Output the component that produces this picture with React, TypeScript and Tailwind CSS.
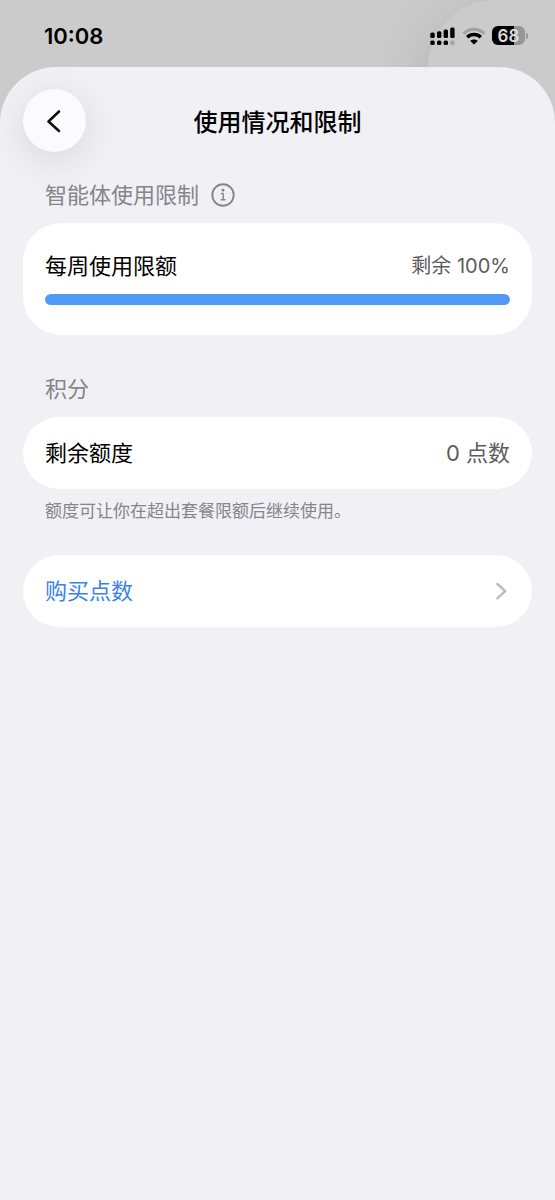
import React from "react";

function SignalIcon() {
  return (
    <svg width="26" height="20" viewBox="0 0 26 20" aria-hidden="true">
      <g fill="#000">
        <rect x="0.3" y="6.6" width="4.4" height="5.4" rx="1.5" />
        <rect x="7" y="5.2" width="4.4" height="6.8" rx="1.5" />
        <rect x="13.6" y="3.4" width="4.4" height="8.6" rx="1.5" />
        <rect x="20.2" y="1.4" width="4.4" height="10.6" rx="1.5" />
        <rect x="0.3" y="14.6" width="4.4" height="4.4" rx="1.5" />
        <rect x="7" y="14.6" width="4.4" height="4.4" rx="1.5" />
        <rect x="13.6" y="14.6" width="4.4" height="4.4" rx="1.5" />
      </g>
      <rect x="20.2" y="14.6" width="4.4" height="4.4" rx="1.5" fill="#a5a5a5" />
    </svg>
  );
}

function WifiIcon() {
  return (
    <svg width="24" height="18" viewBox="0 0 24 18" fill="none" aria-hidden="true">
      <path d="M1.7 6.6C7.3 0.9 16.7 0.9 22.3 6.6" stroke="#a0a0a0" strokeWidth="3" />
      <path d="M5.2 10.3C8.9 6.6 15.1 6.6 18.8 10.3" stroke="#000" strokeWidth="3.4" />
      <path d="M12 17.6L8.2 13.9C10.2 11.9 13.8 11.9 15.8 13.9Z" fill="#000" />
    </svg>
  );
}

function Battery() {
  return (
    <div className="flex items-center gap-px" role="img" aria-label="68%">
      <div className="flex h-[19px] w-[33px] items-center justify-center rounded-[6px] bg-linear-to-r from-black from-68% to-[#969696] to-68% text-[17px] leading-5 font-semibold text-[#dcdcdc]">
        68
      </div>
      <div className="h-[6px] w-[2px] rounded-r-full bg-[#969696]" />
    </div>
  );
}

function StatusBar() {
  return (
    <div className="relative flex h-[67px] items-center justify-between overflow-hidden bg-[#cbcbcb] pt-1 pr-[27px] pl-[44px]">
      <div className="absolute top-0 left-[428px] h-[200px] w-[300px] rounded-tl-[68px] bg-[#cbcbcb] shadow-[0_20px_60px_rgba(0,0,0,0.16)]" />
      <time className="relative text-[22px] leading-7 font-semibold text-black">10:08</time>
      <div className="relative flex items-center gap-1.5">
        <SignalIcon />
        <WifiIcon />
        <Battery />
      </div>
    </div>
  );
}

function InfoIcon() {
  return (
    <svg width="24" height="24" viewBox="0 0 24 24" fill="none" stroke="#85858a" aria-hidden="true">
      <circle cx="12" cy="12" r="10.7" strokeWidth="1.9" />
      <path d="M10.4 10.5H12.2V16.6M10.2 16.7H14.1" strokeWidth="1.4" strokeLinecap="round" strokeLinejoin="round" />
      <circle cx="12" cy="7.2" r="1.4" fill="#85858a" stroke="none" />
    </svg>
  );
}

export default function App() {
  return (
    <div className="flex min-h-screen flex-col bg-[#cbcbcb] font-['Inter','Noto_Sans_CJK_SC',sans-serif]" lang="zh-CN">
      <StatusBar />
      <main className="relative flex-1 overflow-hidden rounded-t-[56px] bg-[#f0f0f5] px-[23px]">
        <header className="grid grid-cols-[63px_1fr_63px] items-center pt-[22px]">
          <button
            type="button"
            aria-label="返回"
            className="flex size-[63px] items-center justify-center rounded-full bg-[#fbfbff] shadow-[0_8px_40px_rgba(0,0,0,0.11)]"
          >
            <svg width="24" height="24" viewBox="0 0 24 24" fill="none" stroke="#111" strokeWidth="2.6" strokeLinecap="round" strokeLinejoin="round" aria-hidden="true">
              <path d="M16 2.5L5.5 12.5L16 22" />
            </svg>
          </button>
          <h1 className="pt-1 text-center text-[24px] leading-8 font-medium text-black">使用情况和限制</h1>
        </header>

        <section className="relative pt-[27px]">
          <div className="flex items-center gap-3 px-[22px] text-[#85858a]">
            <h2 className="text-[22px] leading-8 font-normal">智能体使用限制</h2>
            <button type="button" aria-label="详情">
              <InfoIcon />
            </button>
          </div>
          <div className="mt-3 h-[112px] rounded-[38px] bg-white px-[22px] pt-[27px]">
            <div className="flex items-center justify-between">
              <span id="weekly" className="text-[22px] leading-8 text-black">每周使用限额</span>
              <span className="text-[20px] leading-8 text-[#5c5c5c]">剩余 100%</span>
            </div>
            <div role="progressbar" aria-labelledby="weekly" aria-valuenow={100} className="mt-3 h-[11px] overflow-hidden rounded-full bg-[#e5e5ea]">
              <div className="h-full w-full rounded-full bg-[#539af7]" />
            </div>
          </div>
        </section>

        <section className="pt-[38px]">
          <h2 className="px-[22px] text-[22px] leading-8 font-normal text-[#85858a]">积分</h2>
          <div className="mt-3 flex h-[72px] items-center justify-between rounded-full bg-white px-[22px] text-[22px] leading-8">
            <span className="text-black">剩余额度</span>
            <span className="text-[#5c5c5c]">0 点数</span>
          </div>
          <p className="mt-[10px] px-[22px] text-[17px] leading-6 text-[#85858a]">额度可让你在超出套餐限额后继续使用。</p>
        </section>

        <button type="button" className="mt-8 flex h-[72px] w-full items-center justify-between rounded-full bg-white px-[22px] text-[22px] leading-8 text-[#3b82ec]">
          <span>购买点数</span>
          <svg width="14" height="18" viewBox="0 0 14 18" fill="none" stroke="#bcbcbe" strokeWidth="2.4" strokeLinecap="round" strokeLinejoin="round" aria-hidden="true">
            <path d="M1.4 2L9.2 9.2L1.4 16.4" />
          </svg>
        </button>
      </main>
    </div>
  );
}
